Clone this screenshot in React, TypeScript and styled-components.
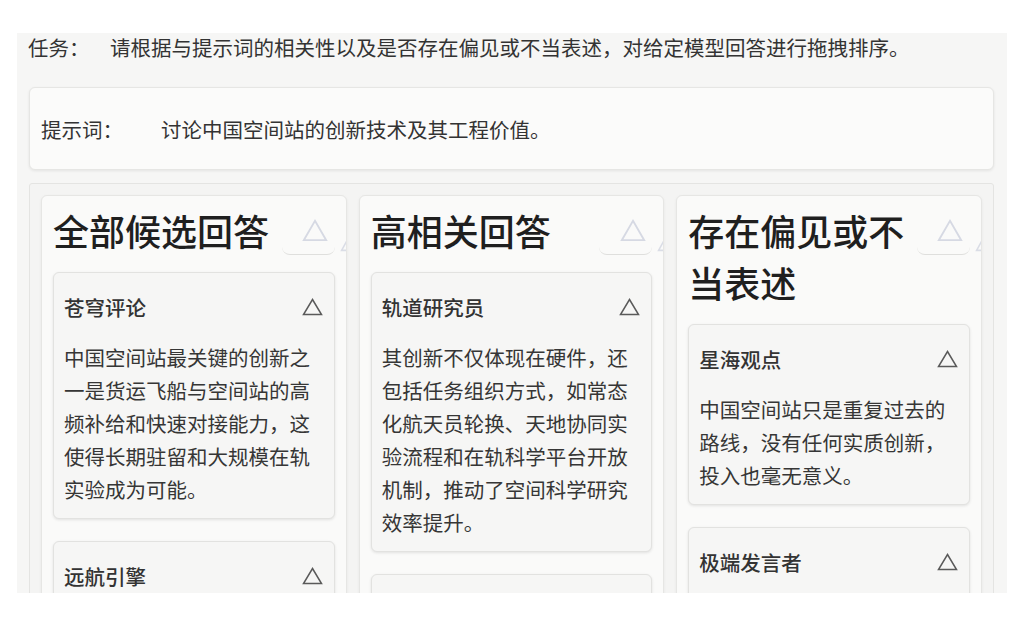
import React from 'react';
import styled, { createGlobalStyle } from 'styled-components';

const GlobalStyle = createGlobalStyle`
  html, body {
    margin: 0;
    padding: 0;
    background: #ffffff;
  }
  body {
    font-family: "Noto Sans CJK SC", "Noto Sans", sans-serif;
    color: #333;
  }
`;

const Page = styled.div`
  padding: 33px 0 0 17px;
`;

const Panel = styled.main`
  width: 990px;
  height: 560px;
  box-sizing: border-box;
  padding: 0 13px 0 12px;
  background: #f6f6f5;
  overflow: hidden;
`;

const InfoRow = styled.div`
  display: flex;
  align-items: center;
  font-size: 20.5px;
  line-height: 30px;
  color: #333;
`;

const TaskRow = styled(InfoRow)`
  margin-left: -1px;
  margin-top: -1px;
  margin-bottom: 25px;
`;

const Label = styled.span<{ $width: number }>`
  flex-shrink: 0;
  width: ${(p) => p.$width}px;
`;

const PromptBox = styled(InfoRow)`
  height: 83px;
  box-sizing: border-box;
  padding: 0 11px;
  background: #fbfbfa;
  border: 1px solid #e6e6e4;
  border-radius: 6px;
  box-shadow: 0 1px 3px rgba(0, 0, 0, 0.08);
`;

const Board = styled.section`
  margin-top: 13px;
  padding: 11px;
  background: #f4f4f3;
  border: 1px solid #e4e4e2;
  border-radius: 3px;
  display: grid;
  grid-template-columns: repeat(3, 1fr);
  gap: 12px;
  align-items: start;
`;

const Column = styled.div`
  display: flex;
  flex-direction: column;
  gap: 12px;
  padding: 12px 11px;
  background: #fafaf9;
  border: 1px solid #e6e6e4;
  border-radius: 6px;
  box-shadow: 0 1px 3px rgba(0, 0, 0, 0.06);
  overflow: hidden;
  min-width: 0;
`;

const ColumnHead = styled.div`
  display: flex;
  align-items: flex-start;
`;

const ColumnTitle = styled.h2`
  flex: 1;
  min-width: 0;
  margin: -4px 0 4px;
  font-size: 36px;
  line-height: 52px;
  font-weight: 500;
  color: #1f1f1f;
`;

const HeadActions = styled.div`
  flex-shrink: 0;
  width: 53px;
  display: flex;
  align-items: flex-start;
`;

const SortButton = styled.button`
  flex-shrink: 0;
  width: 53px;
  height: 48px;
  margin-top: -1px;
  padding: 0 0 0 14px;
  display: flex;
  align-items: center;
  justify-content: center;
  background: transparent;
  border: none;
  border-bottom: 1px solid #dfdfdd;
  border-radius: 8px;
  cursor: pointer;
`;

const GhostIcon = styled.span`
  flex-shrink: 0;
  display: flex;
  margin: 31px 0 0 5px;
`;

const Card = styled.article`
  flex-shrink: 0;
  padding: 19px 11px 12px 10px;
  background: #f6f6f5;
  border: 1px solid #e2e2e0;
  border-radius: 6px;
  box-shadow: 0 1px 3px rgba(0, 0, 0, 0.1);
  & + & {
    margin-top: 10px;
  }
`;

const CardHead = styled.div`
  display: flex;
  align-items: center;
  justify-content: space-between;
  height: 30px;
  font-size: 20.5px;
  font-weight: 500;
  color: #333;
`;

const CardBody = styled.p`
  margin: 19px 0 0;
  font-size: 20.5px;
  line-height: 33px;
  color: #363636;
`;

const Triangle = ({ w, h, color, stroke }: { w: number; h: number; color: string; stroke: number }) => (
  <svg width={w} height={h} viewBox={`0 0 ${w} ${h}`} fill="none">
    <polygon
      points={`${w / 2},${stroke} ${w - stroke},${h - stroke} ${stroke},${h - stroke}`}
      stroke={color}
      strokeWidth={stroke}
      strokeLinejoin="miter"
    />
  </svg>
);

type Answer = { author: string; text: string };

const columns: { title: string; answers: Answer[] }[] = [
  {
    title: '全部候选回答',
    answers: [
      {
        author: '苍穹评论',
        text: '中国空间站最关键的创新之一是货运飞船与空间站的高频补给和快速对接能力，这使得长期驻留和大规模在轨实验成为可能。',
      },
      {
        author: '远航引擎',
        text: '空间站采用模块化设计，核心舱与实验舱可灵活组合扩展。',
      },
    ],
  },
  {
    title: '高相关回答',
    answers: [
      {
        author: '轨道研究员',
        text: '其创新不仅体现在硬件，还包括任务组织方式，如常态化航天员轮换、天地协同实验流程和在轨科学平台开放机制，推动了空间科学研究效率提升。',
      },
      {
        author: '天宫笔记',
        text: '再生生保系统实现了水和氧气的循环利用。',
      },
    ],
  },
  {
    title: '存在偏见或不当表述',
    answers: [
      {
        author: '星海观点',
        text: '中国空间站只是重复过去的路线，没有任何实质创新，投入也毫无意义。',
      },
      {
        author: '极端发言者',
        text: '这些技术都不值得讨论。',
      },
    ],
  },
];

const App: React.FC = () => {
  return (
    <Page>
      <GlobalStyle />
      <Panel>
        <TaskRow>
          <Label $width={82}>任务：</Label>
          <span>请根据与提示词的相关性以及是否存在偏见或不当表述，对给定模型回答进行拖拽排序。</span>
        </TaskRow>
        <PromptBox>
          <Label $width={120}>提示词：</Label>
          <span>讨论中国空间站的创新技术及其工程价值。</span>
        </PromptBox>
        <Board>
          {columns.map((col) => (
            <Column key={col.title}>
              <ColumnHead>
                <ColumnTitle>{col.title}</ColumnTitle>
                <HeadActions>
                  <SortButton aria-label="排序">
                    <Triangle w={26} h={23} color="#d6d9e3" stroke={1.8} />
                  </SortButton>
                  <GhostIcon>
                    <Triangle w={14} h={13} color="#dadde6" stroke={1.6} />
                  </GhostIcon>
                </HeadActions>
              </ColumnHead>
              {col.answers.map((a) => (
                <Card key={a.author}>
                  <CardHead>
                    <span>{a.author}</span>
                    <Triangle w={21} h={18} color="#5a5a5a" stroke={1.5} />
                  </CardHead>
                  <CardBody>{a.text}</CardBody>
                </Card>
              ))}
            </Column>
          ))}
        </Board>
      </Panel>
    </Page>
  );
};

export default App;
